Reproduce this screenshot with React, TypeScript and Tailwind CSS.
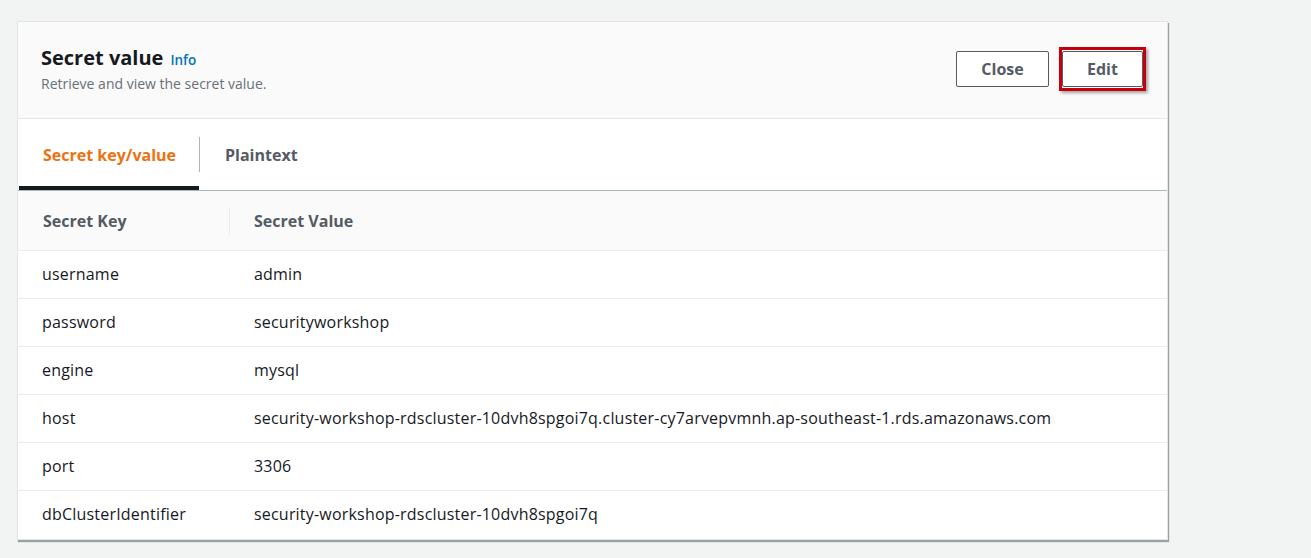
import React from "react";

const rows: [string, string][] = [
  ["username", "admin"],
  ["password", "securityworkshop"],
  ["engine", "mysql"],
  ["host", "security-workshop-rdscluster-10dvh8spgoi7q.cluster-cy7arvepvmnh.ap-southeast-1.rds.amazonaws.com"],
  ["port", "3306"],
  ["dbClusterIdentifier", "security-workshop-rdscluster-10dvh8spgoi7q"],
];

export default function App() {
  return (
    <div
      className="w-[1311px] h-[558px] bg-[#f2f3f3] pt-[21px] pl-[17px] overflow-hidden"
      style={{ fontFamily: '"Open Sans", "Noto Sans", sans-serif' }}
    >
      <div className="w-[1151px] bg-white border border-[#e3e6e6] shadow-[1px_2px_1px_0_rgba(84,91,100,0.55)]">
        {/* Header */}
        <div className="h-[97px] bg-[#fafafa] border-b border-[#e5e7e7] flex items-start justify-between pl-[23px] pr-[21px]">
          <div className="pt-[23px]">
            <div className="flex items-baseline gap-[7px]">
              <span className="text-[20px] font-bold text-[#16191f] leading-[26px]">Secret value</span>
              <span className="text-[13.5px] font-semibold text-[#0073bb]">Info</span>
            </div>
            <div className="text-[14px] text-[#687078] mt-[2px]">Retrieve and view the secret value.</div>
          </div>
          <div className="flex items-center gap-[10px] pt-[25px]">
            <button className="w-[93px] h-[36px] border border-[#545b64] rounded-[2px] bg-white text-[16px] font-bold text-[#545b64]">
              Close
            </button>
            <div className="border-[3px] border-[#c3000b] py-[1px] shadow-[2px_2px_3px_rgba(0,0,0,0.35)]">
              <button className="block w-[81px] h-[36px] border border-[#545b64] rounded-[2px] bg-white text-[16px] font-bold text-[#545b64]">
                Edit
              </button>
            </div>
          </div>
        </div>
        {/* Tabs */}
        <div className="h-[72px] flex border-b border-[#aab7b8] pl-[1px]">
          <div className="relative w-[180px] flex items-center pl-[24px]">
            <span className="text-[16px] font-bold text-[#ec7211]">Secret key/value</span>
            <div className="absolute left-0 right-0 bottom-0 h-[4px] bg-[#16191f]" />
          </div>
          <div className="flex items-center">
            <div className="w-px h-[35px] bg-[#aab7b8]" />
            <span className="pl-[25px] text-[16px] font-bold text-[#545b64]">Plaintext</span>
          </div>
        </div>
        {/* Table */}
        <div>
          <div className="h-[60px] bg-[#fafafa] flex items-center border-b border-[#eaeded]">
            <div className="w-[212px] pl-[25px] flex items-center justify-between pr-0">
              <span className="text-[16px] font-bold text-[#545b64]">Secret Key</span>
              <div className="w-px h-[28px] bg-[#eaeded]" />
            </div>
            <span className="pl-[24px] text-[16px] font-bold text-[#545b64]">Secret Value</span>
          </div>
          {rows.map(([k, v], i) => (
            <div
              key={k}
              className={`h-[48px] flex items-center text-[16px] tracking-[0.2px] text-[#16191f] ${i < rows.length - 1 ? "border-b border-[#eaeded]" : ""}`}
            >
              <div className="w-[236px] pl-[24px] -mt-[2px]">{k}</div>
              <div className="-mt-[2px]">{v}</div>
            </div>
          ))}
        </div>
      </div>
    </div>
  );
}
